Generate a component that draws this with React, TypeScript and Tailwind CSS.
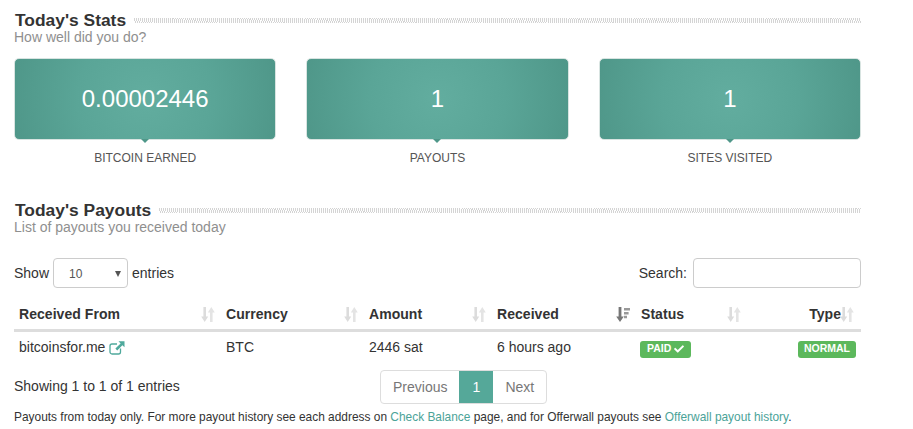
import React from 'react'
import { FaCheck } from 'react-icons/fa'

const stats = [
  { value: '0.00002446', label: 'Bitcoin Earned' },
  { value: '1', label: 'Payouts' },
  { value: '1', label: 'Sites Visited' },
]

function SectionTitle({ title, sub }: { title: string; sub: string }) {
  return (
    <div>
      <div className="flex items-start h-[18px]">
        <h2 className="pl-px text-[17.4px] leading-[19px] font-bold text-[#333] whitespace-nowrap">{title}</h2>
        <div className="ml-[8px] mt-[7px] h-[5px] flex-1 bg-[repeating-linear-gradient(100deg,#d4d4d4_0px,#d4d4d4_1px,#ffffff_1px,#ffffff_2px)]" />
      </div>
      <p className="text-[14px] leading-[16px] text-[#8f8f8f]">{sub}</p>
    </div>
  )
}

function SortIcon({ active }: { active?: boolean }) {
  if (active) {
    return (
      <svg width="14" height="15" viewBox="0 0 14 15" className="absolute right-[7px] top-[8px]">
        <path d="M2.6 0h2.8v9.5h2.4L4 15 .2 9.5h2.4z" fill="#777" />
        <path d="M8 1h6v2.6H8zM8 5h4.6v2.4H8zM8 8.8h3v2.4H8z" fill="#999" />
      </svg>
    )
  }
  return (
    <svg width="14" height="15" viewBox="0 0 14 15" className="absolute right-[7px] top-[8px]">
      <path d="M2.4 0h2.6v9.5h2.2L3.7 15 .2 9.5h2.2z" fill="#dcdcdc" />
      <path d="M9 15h2.6V5.5h2.2L10.3 0 6.8 5.5H9z" fill="#e4e4e4" />
    </svg>
  )
}

function ExternalIcon() {
  return (
    <svg width="16" height="14" viewBox="0 0 16 14" fill="none" className="text-[#4fa99c]">
      <path d="M11.5 7.5V11a2 2 0 0 1-2 2H3a2 2 0 0 1-2-2V5a2 2 0 0 1 2-2h5" stroke="currentColor" strokeWidth="1.3" />
      <path d="M9.5 0.3H15.5V6.3L13.4 4.2 8.2 9.4 6.4 7.6 11.6 2.4z" fill="currentColor" />
    </svg>
  )
}

function Th({ children, active, right, first }: { children: string; active?: boolean; right?: boolean; first?: boolean }) {
  return (
    <th className={`relative h-[31px] pt-[2px] pr-[4px] ${first ? 'pl-[5px]' : 'pl-[4px]'} text-[14px] font-bold tracking-[0.05px] text-[#333] ${right ? 'text-right pr-[20px]' : 'text-left'}`}>
      {children}
      <SortIcon active={active} />
    </th>
  )
}

export default function App() {
  return (
    <div className="w-[913px] h-[429px] overflow-hidden bg-white pl-[14px] pt-[11px] font-['Liberation_Sans',Arial,sans-serif] text-[#333]">
      <div className="w-[847px]">
        <SectionTitle title="Today's Stats" sub="How well did you do?" />

        <div className="mt-[13px] grid grid-cols-3 gap-x-[30px]">
          {stats.map((s, i) => (
            <div key={i} className="flex flex-col items-center">
              <div className="relative flex h-[82px] w-full items-center justify-center rounded-[5px] border border-[#d8e4e1] bg-[radial-gradient(circle_at_center,#62ad9f_0%,#5aa597_50%,#4f9789_100%)] text-[24px] text-white">
                {s.value}
                <span className="absolute left-1/2 top-full -ml-[4px] border-x-[4px] border-t-[4px] border-x-transparent border-t-[#4f9789]" />
              </div>
              <div className="mt-[11px] text-[12px] leading-[14px] uppercase text-[#555]">{s.label}</div>
            </div>
          ))}
        </div>

        <div className="mt-[36px]">
          <SectionTitle title="Today's Payouts" sub="List of payouts you received today" />
        </div>

        <div className="mt-[23px] flex items-center justify-between text-[14px] h-[30px]">
          <div className="flex items-center">
            <span>Show</span>
            <div className="relative mx-[4px] flex h-[30px] w-[75px] items-center rounded-[4px] border border-[#ccc] pl-[15px] pt-px text-[12px] text-[#555]">
              10
              <span className="absolute right-[6px] top-[12px] border-x-[3.5px] border-t-[6px] border-x-transparent border-t-[#555]" />
            </div>
            <span>entries</span>
          </div>
          <div className="flex items-center">
            <span className="mr-[6px]">Search:</span>
            <div className="h-[30px] w-[168px] rounded-[4px] border border-[#ccc]" />
          </div>
        </div>

        <table className="mt-[11px] w-full table-fixed border-collapse text-[14px]">
          <colgroup>
            <col className="w-[208px]" />
            <col className="w-[143px]" />
            <col className="w-[128px]" />
            <col className="w-[144px]" />
            <col className="w-[111px]" />
            <col />
          </colgroup>
          <thead>
            <tr className="border-b-[3px] border-[#ddd]">
              <Th first>Received From</Th>
              <Th>Currency</Th>
              <Th>Amount</Th>
              <Th active>Received</Th>
              <Th>Status</Th>
              <Th right>Type</Th>
            </tr>
          </thead>
          <tbody>
            <tr className="h-[34px]">
              <td className="px-[5px]">
                <span className="inline-flex items-center gap-[4px]">
                  bitcoinsfor.me
                  <ExternalIcon />
                </span>
              </td>
              <td className="px-[4px]">BTC</td>
              <td className="px-[4px]">2446 sat</td>
              <td className="px-[4px]">6 hours ago</td>
              <td className="px-[3px]">
                <span className="inline-flex h-[17px] items-center gap-[3px] rounded-[3px] bg-[#5cb85c] px-[7px] text-[10.5px] font-bold text-white">
                  PAID <FaCheck size={10} />
                </span>
              </td>
              <td className="pr-[5px] text-right">
                <span className="inline-flex h-[17px] items-center rounded-[3px] bg-[#5cb85c] px-[6px] text-[10.5px] font-bold text-white">
                  NORMAL
                </span>
              </td>
            </tr>
          </tbody>
        </table>

        <div className="mt-[6px] flex h-[34px] items-start text-[14px]">
          <span className="mt-[8px] w-[366px] leading-[16px]">Showing 1 to 1 of 1 entries</span>
          <div className="flex h-[34px] overflow-hidden rounded-[4px] border border-[#ddd] text-[#777]">
            <span className="flex items-center px-[12px]">Previous</span>
            <span className="flex w-[34px] items-center justify-center bg-[#55a899] text-white">1</span>
            <span className="flex items-center px-[12px]">Next</span>
          </div>
        </div>

        <p className="mt-[6px] text-[11.91px] leading-[14px] whitespace-nowrap">
          Payouts from today only. For more payout history see each address on{' '}
          <a className="text-[#4ba398]">Check Balance</a> page, and for Offerwall payouts see{' '}
          <a className="text-[#4ba398]">Offerwall payout history</a>.
        </p>
      </div>
    </div>
  )
}
